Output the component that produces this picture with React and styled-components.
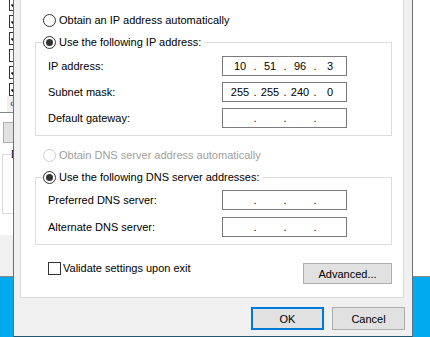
import React from 'react'
import styled, { createGlobalStyle } from 'styled-components'

const GlobalStyle = createGlobalStyle`
  html, body {
    margin: 0;
    padding: 0;
  }
  body {
    width: 430px;
    height: 337px;
    overflow: hidden;
    font-family: "Liberation Sans", Arial, sans-serif;
    font-size: 11px;
    color: #000;
  }
`

const Desktop = styled.div`
  position: relative;
  width: 430px;
  height: 337px;
  overflow: hidden;
  background: #01a9ee;
`

/* window behind the dialog */
const BackWindow = styled.div`
  position: absolute;
  left: 0;
  top: 0;
  width: 430px;
  height: 277px;
  box-sizing: border-box;
  background: #fff;
  border-bottom: 1px solid #8c8c8c;
  display: flex;
`

const BackColumn = styled.div`
  width: 13px;
  display: flex;
  flex-direction: column;
  overflow: hidden;
`

const CheckList = styled.div`
  height: 113px;
  flex: none;
  box-sizing: border-box;
  border-bottom: 1px solid #828790;
  display: flex;
  flex-direction: column;
`

const CheckRows = styled.div`
  flex: 1;
  overflow: hidden;
  display: flex;
  flex-direction: column;
  & > :first-child {
    margin-top: -4px;
  }
`

const CheckRow = styled.div`
  height: 17px;
  flex: none;
  display: flex;
  align-items: center;
  padding-left: 9px;
`

const SmallBox = styled.span`
  width: 13px;
  height: 13px;
  flex: none;
  box-sizing: border-box;
  border: 1px solid #333;
  background: #fff;
  display: flex;
`

const ScrollRow = styled.div`
  height: 16px;
  flex: none;
  display: flex;
  padding-left: 7px;
`

const ScrollArrow = styled.span`
  flex: 1;
  background: #f0f0f0;
  color: #606060;
  font-size: 10px;
  line-height: 15px;
  padding-left: 3px;
  font-weight: bold;
`

const BackButton = styled.div`
  margin: 9px 0 0 3px;
  width: 60px;
  height: 21px;
  flex: none;
  box-sizing: border-box;
  background: #e1e1e1;
  border: 1px solid #adadad;
`

const BackGroup = styled.fieldset`
  margin: 5px 0 0 2px;
  padding: 0;
  width: 200px;
  height: 66px;
  box-sizing: border-box;
  border: 1px solid #dcdcdc;
  flex: none;
`

const BackLegend = styled.legend`
  margin-left: 8px;
  padding: 0 2px 0 0;
  line-height: 12px;
  white-space: nowrap;
`

const BackFooter = styled.div`
  margin-top: auto;
  height: 41px;
  flex: none;
  background: #f0f0f0;
`

/* the dialog */
const Dialog = styled.div`
  position: absolute;
  left: 13px;
  top: 0;
  width: 400px;
  height: 337px;
  box-sizing: border-box;
  background: #f0f0f0;
  border-left: 1px solid #6f6f6f;
  border-right: 1px solid #6f6f6f;
  border-bottom: 1px solid #23576f;
  padding: 0 7px 0 6px;
  display: flex;
  flex-direction: column;
`

const TabPage = styled.div`
  width: 384px;
  height: 298px;
  flex: none;
  box-sizing: border-box;
  background: #fff;
  border: 1px solid #d9d9d9;
  border-top: none;
  padding: 13px 11px 0 14px;
  display: flex;
  flex-direction: column;
`

const RadioRow = styled.label`
  display: flex;
  align-items: center;
  gap: 3px;
  height: 14px;
  line-height: 14px;
  white-space: nowrap;
  margin-left: ${p => p.$indent || 0}px;
  margin-top: ${p => p.$top || 0}px;
  color: ${p => (p.$disabled ? '#a0a0a0' : '#000')};
`

const Radio = styled.span`
  width: 13px;
  height: 13px;
  flex: none;
  box-sizing: border-box;
  border-radius: 50%;
  border: 1px solid ${p => (p.$disabled ? '#cccccc' : '#333')};
  background: #fff;
  display: flex;
  align-items: center;
  justify-content: center;

  &::after {
    content: '';
    width: 7px;
    height: 7px;
    border-radius: 50%;
    background: #333;
    display: ${p => (p.$checked ? 'block' : 'none')};
  }
`

const Group = styled.fieldset`
  margin: ${p => p.$top}px 0 0 0;
  padding: 0;
  border: 1px solid #dcdcdc;
  min-width: 0;
`

const Legend = styled.legend`
  margin-left: 7px;
  padding: 0 3px 0 0;
  background: #fff;
`

const Fields = styled.div`
  display: grid;
  grid-template-columns: 174px 125px;
  row-gap: ${p => p.$gap}px;
  padding: ${p => p.$top}px 0 7px 12px;
  align-items: center;
`

const FieldLabel = styled.span`
  line-height: 20px;
  white-space: nowrap;
`

const IpBox = styled.div`
  width: 125px;
  height: 20px;
  box-sizing: border-box;
  border: 1px solid #7a7a7a;
  background: #fff;
  padding-left: 5px;
  display: grid;
  grid-template-columns: 24px 6px 24px 6px 24px 6px 24px;
  align-items: center;
  line-height: 18px;
`

const Octet = styled.span`
  text-align: center;
`

const Dot = styled.span`
  text-align: center;
`

const BottomRow = styled.div`
  display: flex;
  align-items: flex-start;
  margin-top: 17px;
`

const CheckLabel = styled.label`
  display: flex;
  align-items: center;
  gap: 2px;
  height: 13px;
  line-height: 13px;
  margin-left: 13px;
  white-space: nowrap;
`

const Button = styled.button`
  width: ${p => p.$w}px;
  height: ${p => p.$h}px;
  box-sizing: border-box;
  background: #e1e1e1;
  border: ${p => (p.$default ? '2px solid #0078d7' : '1px solid #adadad')};
  border-radius: 0;
  padding: 0;
  font-family: inherit;
  font-size: 11px;
  color: #000;
  margin-left: ${p => (p.$push ? 'auto' : '0')};
  margin-top: ${p => p.$top || 0}px;
`

const Footer = styled.div`
  display: flex;
  justify-content: flex-end;
  gap: 8px;
  margin-top: 9px;
`

function Check() {
  return (
    <SmallBox>
      <svg width="11" height="11" viewBox="0 0 11 11">
        <path d="M1.5 5.5 L4 8 L9 2.5" fill="none" stroke="#000" strokeWidth="1.6" />
      </svg>
    </SmallBox>
  )
}

function IpField({ value }) {
  const parts = value ? value.split('.') : ['', '', '', '']
  return (
    <IpBox>
      <Octet>{parts[0]}</Octet>
      <Dot>.</Dot>
      <Octet>{parts[1]}</Octet>
      <Dot>.</Dot>
      <Octet>{parts[2]}</Octet>
      <Dot>.</Dot>
      <Octet>{parts[3]}</Octet>
    </IpBox>
  )
}

export default function App() {
  const listRows = [true, true, true, false, true, true]

  return (
    <Desktop>
      <GlobalStyle />

      <BackWindow>
        <BackColumn>
          <CheckList>
            <CheckRows>
              {listRows.map((checked, i) => (
                <CheckRow key={`row_${i}`}>
                  {checked ? <Check /> : <SmallBox />}
                </CheckRow>
              ))}
            </CheckRows>
            <ScrollRow>
              <ScrollArrow>‹</ScrollArrow>
            </ScrollRow>
          </CheckList>
          <BackButton />
          <BackGroup>
            <BackLegend>D</BackLegend>
          </BackGroup>
          <BackFooter />
        </BackColumn>
      </BackWindow>

      <Dialog>
        <TabPage>
          <RadioRow $indent={8}>
            <Radio />
            Obtain an IP address automatically
          </RadioRow>

          <Group $top={8}>
            <Legend>
              <RadioRow>
                <Radio $checked />
                Use the following IP address:
              </RadioRow>
            </Legend>
            <Fields $top={7} $gap={6}>
              <FieldLabel>IP address:</FieldLabel>
              <IpField value="10.51.96.3" />
              <FieldLabel>Subnet mask:</FieldLabel>
              <IpField value="255.255.240.0" />
              <FieldLabel>Default gateway:</FieldLabel>
              <IpField />
            </Fields>
          </Group>

          <RadioRow $indent={8} $top={12} $disabled>
            <Radio $disabled />
            Obtain DNS server address automatically
          </RadioRow>

          <Group $top={8}>
            <Legend>
              <RadioRow>
                <Radio $checked />
                Use the following DNS server addresses:
              </RadioRow>
            </Legend>
            <Fields $top={6} $gap={7}>
              <FieldLabel>Preferred DNS server:</FieldLabel>
              <IpField />
              <FieldLabel>Alternate DNS server:</FieldLabel>
              <IpField />
            </Fields>
          </Group>

          <BottomRow>
            <CheckLabel>
              <SmallBox />
              Validate settings upon exit
            </CheckLabel>
            <Button $w={89} $h={21} $top={1} $push>Advanced...</Button>
          </BottomRow>
        </TabPage>

        <Footer>
          <Button $w={73} $h={23} $default>OK</Button>
          <Button $w={73} $h={23}>Cancel</Button>
        </Footer>
      </Dialog>
    </Desktop>
  )
}
